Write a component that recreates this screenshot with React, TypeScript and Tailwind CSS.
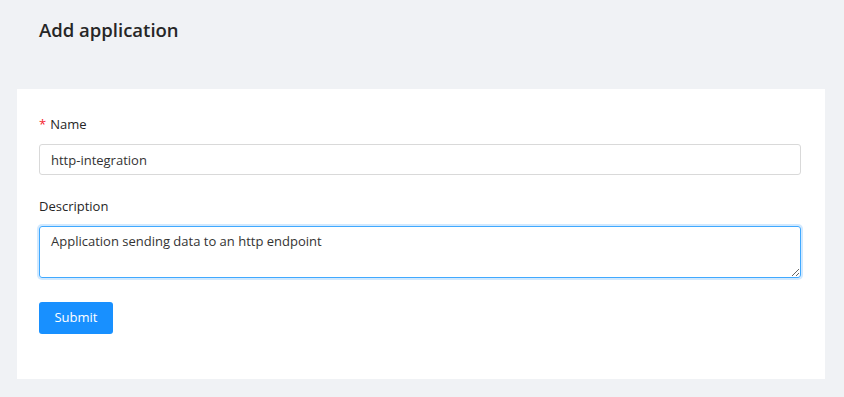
import { useState } from "react";

export default function App() {
  // valores do formulário
  const [name, setName] = useState("http-integration");
  const [description, setDescription] = useState(
    "Application sending data to an http endpoint"
  );

  return (
    <div
      className="min-h-screen w-full bg-[#f0f2f5] text-[14px] text-[#262626]"
      style={{ fontFamily: '"Open Sans", "Noto Sans", sans-serif' }}
    >
      {/* Cabeçalho */}
      <div className="px-[39px] pt-[16px] pb-[45px]">
        <h1 className="text-[18.5px] leading-[28px] font-semibold text-[#262626]">
          Add application
        </h1>
      </div>

      {/* Card do formulário */}
      <div className="ml-[17px] mr-[19px] bg-white px-[22px] pt-[25px] pb-[45px]">
        <label className="flex h-[22px] items-center text-[13px] text-[#262626] mb-[8px]">
          <span className="mr-[4px] text-[#f5222d]">*</span>
          Name
        </label>
        <input
          value={name}
          onChange={(e) => setName(e.target.value)}
          className="block h-[31px] w-[762px] rounded-[3px] border border-[#d9d9d9] px-[11px] text-[13px] text-[#333] outline-none"
        />

        <label className="mt-[21px] flex h-[22px] items-center text-[13px] text-[#262626] mb-[8px]">
          Description
        </label>
        <textarea
          value={description}
          onChange={(e) => setDescription(e.target.value)}
          className="block h-[52px] w-[762px] rounded-[3px] border border-[#40a9ff] px-[11px] py-[4px] text-[13px] leading-[20px] text-[#333] shadow-[0_0_0_2px_rgba(24,144,255,0.2)] outline-none"
        />

        <button className="mt-[24px] h-[32px] w-[74px] rounded-[3px] bg-[#1890ff] text-[13px] text-white">
          Submit
        </button>
      </div>
    </div>
  );
}
